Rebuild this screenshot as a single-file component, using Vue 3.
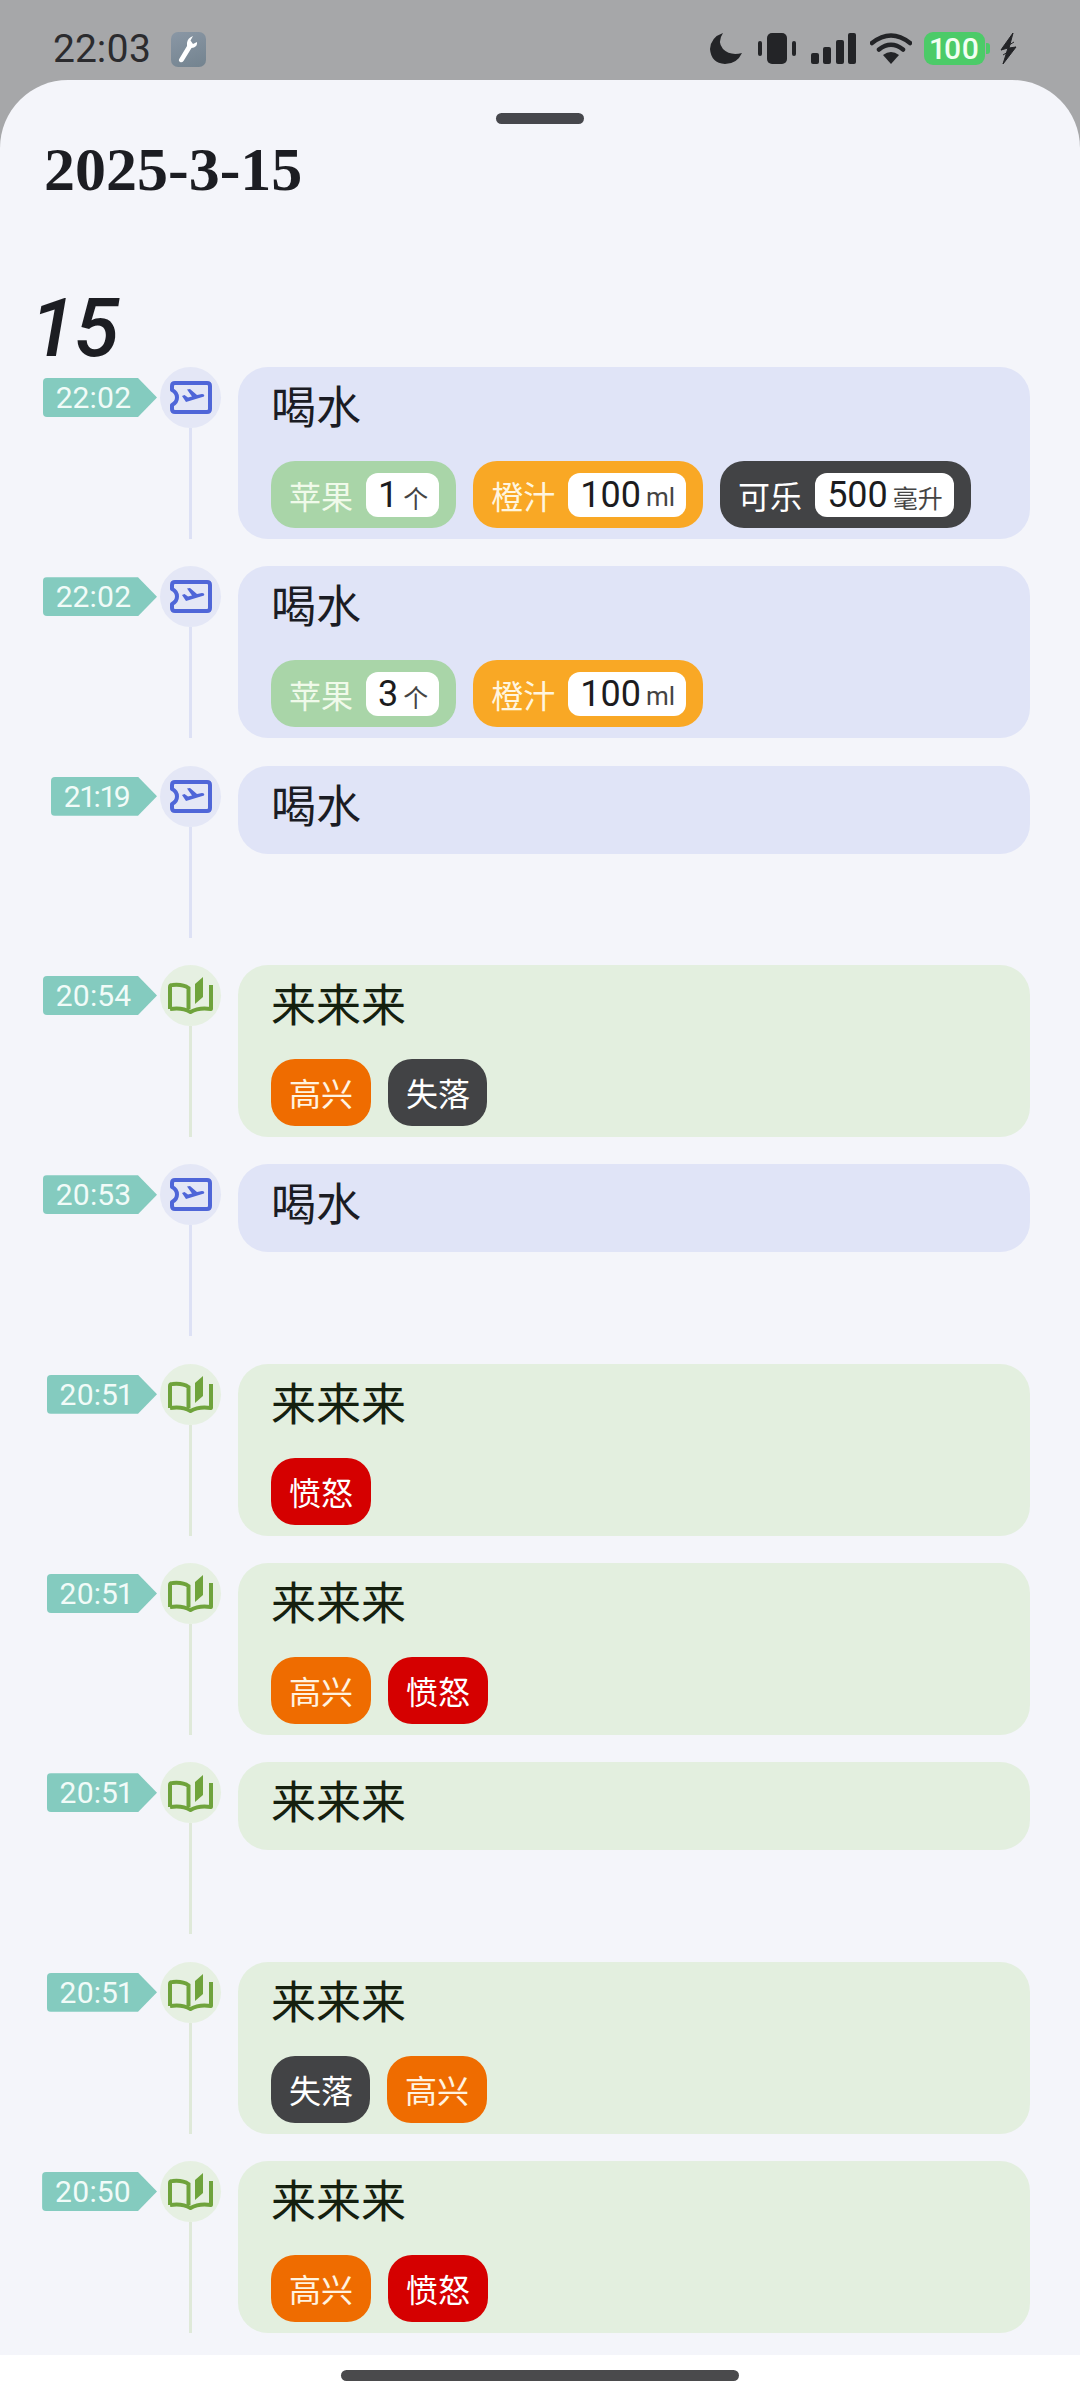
<script setup>
const blue = '喝水'
const green = '来来来'

const rows = [
  { time: '22:02', kind: 'drink', title: blue, tags: [
    { name: '苹果', color: 'green', value: '1', unit: '个' },
    { name: '橙汁', color: 'amber', value: '100', unit: 'ml' },
    { name: '可乐', color: 'dark', value: '500', unit: '毫升' },
  ] },
  { time: '22:02', kind: 'drink', title: blue, tags: [
    { name: '苹果', color: 'green', value: '3', unit: '个' },
    { name: '橙汁', color: 'amber', value: '100', unit: 'ml' },
  ] },
  { time: '21:19', kind: 'drink', title: blue, tags: [] },
  { time: '20:54', kind: 'read', title: green, tags: [
    { name: '高兴', color: 'orange' },
    { name: '失落', color: 'dark' },
  ] },
  { time: '20:53', kind: 'drink', title: blue, tags: [] },
  { time: '20:51', kind: 'read', title: green, tags: [{ name: '愤怒', color: 'red' }] },
  { time: '20:51', kind: 'read', title: green, tags: [
    { name: '高兴', color: 'orange' },
    { name: '愤怒', color: 'red' },
  ] },
  { time: '20:51', kind: 'read', title: green, tags: [] },
  { time: '20:51', kind: 'read', title: green, tags: [
    { name: '失落', color: 'dark' },
    { name: '高兴', color: 'orange' },
  ] },
  { time: '20:50', kind: 'read', title: green, tags: [
    { name: '高兴', color: 'orange' },
    { name: '愤怒', color: 'red' },
  ] },
]
</script>

<template>
  <div class="screen">
    <header class="status">
      <div class="status-left">
        <span class="clock">22:03</span>
        <span class="tool">
          <svg width="22" height="30" viewBox="0 0 22 30">
            <path d="M16 1 L13.5 5.5 L16 9 L20 7 Q20.5 11 17 12.5 L14.5 13 L6.5 26 Q5 28 3 27 Q1 25.5 2.5 23.5 L10 11 L10 8 Q10.5 3 16 1 Z" fill="#fff" />
          </svg>
        </span>
      </div>
      <div class="status-right">
        <svg class="ic-moon" width="32" height="31" viewBox="0 0 32 31">
          <path d="M13 0 Q7 9 13 16 Q20 23 32 20 Q27 31 15 31 Q1 30 0 16 Q1 4 13 0 Z" fill="#232427" />
        </svg>
        <svg class="ic-vib" width="38" height="31" viewBox="0 0 38 31">
          <rect x="9" y="0" width="20" height="31" rx="5" fill="#232427" />
          <rect x="0" y="8" width="4" height="15" rx="2" fill="#232427" />
          <rect x="34" y="8" width="4" height="15" rx="2" fill="#232427" />
        </svg>
        <svg class="ic-signal" width="45" height="31" viewBox="0 0 45 31">
          <rect x="0" y="20" width="8" height="11" rx="2" fill="#232427" />
          <rect x="12" y="14" width="8" height="17" rx="2" fill="#232427" />
          <rect x="25" y="7" width="8" height="24" rx="2" fill="#232427" />
          <rect x="37" y="0" width="8" height="31" rx="2" fill="#232427" />
        </svg>
        <svg class="ic-wifi" width="42" height="31" viewBox="0 0 42 31">
          <path d="M2 10 Q21 -5 40 10 M9 16.5 Q21 7 33 16.5" fill="none" stroke="#232427" stroke-width="4.5" stroke-linecap="round" />
          <path d="M21 31 L13 22 Q21 16 29 22 Z" fill="#232427" />
        </svg>
        <span class="battery">100<i class="nub"></i></span>
        <svg class="ic-bolt" width="17" height="31" viewBox="0 0 17 31">
          <path d="M13 0 L3 14 L1 17 L8 15 L3 31 L16 14 L9 15 Z M14 9 L1 17 M16 14 L3 22" fill="#232427" stroke="#232427" stroke-width="1" />
        </svg>
      </div>
    </header>

    <main class="sheet">
      <div class="handle"></div>
      <h1 class="date">2025-3-15</h1>
      <div class="day">15</div>
      <ul class="timeline">
        <li v-for="(row, i) in rows" :key="i" class="row" :class="row.kind">
          <div class="time-col">
            <span class="time">{{ row.time }}</span>
          </div>
          <div class="node">
            <div class="dot">
              <svg v-if="row.kind === 'drink'" width="42" height="33" viewBox="0 0 42 33">
                <path d="M5 2 H37 Q40 2 40 5 V28 Q40 31 37 31 H5 Q2 31 2 28 V24 Q7 21.5 7 16.5 Q7 11.5 2 9 V5 Q2 2 5 2 Z" fill="none" stroke="#4f66d8" stroke-width="4" stroke-linejoin="round" />
                <path d="M12 15 L14.5 14 L18 16.5 L22 15.5 L17 8.5 L20 8 L27 14 L32 13 Q35 13 34 15.5 L16 21 Z" fill="#4f66d8" />
              </svg>
              <svg v-else width="45" height="38" viewBox="0 0 45 38">
                <path d="M2 33 V11 Q2 9 4.5 9 Q15 8 20.5 12 V33" fill="none" stroke="#6fa33c" stroke-width="4" />
                <path d="M2 33 Q14 31 22.5 36 Q31 31 43 33 V9" fill="none" stroke="#6fa33c" stroke-width="4" stroke-linejoin="round" />
                <path d="M27 8 L35 1 V21 L27 28 Z" fill="#6fa33c" />
              </svg>
            </div>
            <div class="line"></div>
          </div>
          <div class="card">
            <div class="title">{{ row.title }}</div>
            <div v-if="row.tags.length" class="tags">
              <div v-for="tag in row.tags" :key="tag.name" class="tag" :class="tag.color">
                <span>{{ tag.name }}</span>
                <span v-if="tag.value" class="amount">
                  <b>{{ tag.value }}</b><small>{{ tag.unit }}</small>
                </span>
              </div>
            </div>
          </div>
        </li>
      </ul>
    </main>

    <footer class="nav">
      <div class="home"></div>
    </footer>
  </div>
</template>

<style>
html, body {
  margin: 0;
  background: #fff;
}
</style>

<style scoped>
.screen {
  width: 1080px;
  height: 2400px;
  display: flex;
  flex-direction: column;
  background: #a6a7a9;
  font-family: Roboto, "Noto Sans CJK SC", sans-serif;
  font-variant-numeric: proportional-nums;
  overflow: hidden;
}

/* status bar */
.status {
  height: 80px;
  flex: none;
  display: flex;
  justify-content: space-between;
  align-items: flex-start;
  box-sizing: border-box;
  padding: 32px 63px 0 53px;
}
.status-left {
  display: flex;
  align-items: center;
  gap: 20px;
}
.clock {
  font-size: 39px;
  line-height: 35px;
  color: #2b2b2e;
}
.tool {
  width: 35px;
  height: 35px;
  border-radius: 7px;
  background: linear-gradient(160deg, #8a97a5, #73838f);
  display: flex;
  align-items: center;
  justify-content: center;
}
.status-right {
  display: flex;
  align-items: center;
  height: 33px;
}
.ic-vib { margin-left: 16px; }
.ic-signal { margin-left: 15px; }
.ic-wifi { margin-left: 14px; }
.battery {
  position: relative;
  margin-left: 12px;
  width: 61px;
  height: 33px;
  border-radius: 9px;
  background: #4ccb68;
  color: #f2fff2;
  font-size: 30px;
  font-weight: 500;
  line-height: 33px;
  text-align: center;
}
.nub {
  position: absolute;
  right: -5px;
  top: 11px;
  width: 4px;
  height: 11px;
  border-radius: 0 3px 3px 0;
  background: #4ccb68;
}
.ic-bolt { margin-left: 15px; }

/* sheet */
.sheet {
  height: 2275px;
  flex: none;
  box-sizing: border-box;
  border-radius: 68px 68px 0 0;
  background: #f4f5fa;
  overflow: hidden;
}
.handle {
  width: 88px;
  height: 11px;
  border-radius: 6px;
  margin: 33px auto 0;
  background: #46474c;
}
.date {
  margin: 15px 0 0 44px;
  font-family: "Liberation Serif", serif;
  font-weight: 700;
  font-size: 62px;
  line-height: 60px;
  color: #1c1d22;
}
.day {
  margin: 91px 0 0 33px;
  height: 77px;
  font-size: 82px;
  line-height: 77px;
  letter-spacing: 4px;
  font-style: italic;
  font-weight: 500;
  color: #1c1d22;
}
.timeline {
  list-style: none;
  margin: 0;
  padding: 0;
  display: flex;
  flex-direction: column;
  gap: 27.33px;
}
.row {
  display: flex;
  height: 172px;
}
.time-col {
  width: 157px;
  flex: none;
  display: flex;
  justify-content: flex-end;
  align-items: flex-start;
  padding-top: 11px;
}
.time {
  height: 39px;
  line-height: 39px;
  box-sizing: border-box;
  padding: 0 26px 0 13px;
  font-size: 30px;
  color: #f1fbf8;
  background: #84cbbf;
  border-radius: 4px 0 0 4px;
  clip-path: polygon(0 0, calc(100% - 19px) 0, 100% 50%, calc(100% - 19px) 100%, 0 100%);
}
.node {
  width: 61px;
  margin-left: 3px;
  flex: none;
  display: flex;
  flex-direction: column;
  align-items: center;
}
.dot {
  width: 61px;
  height: 61px;
  flex: none;
  border-radius: 50%;
  display: flex;
  align-items: center;
  justify-content: center;
}
.line {
  width: 3px;
  flex: 1;
}
.drink .dot { background: #e4e7f6; }
.drink .line { background: #dde1f5; }
.read .dot { background: #e6f0e2; }
.read .line { background: #dfe9d9; }

.card {
  width: 792px;
  margin-left: 17px;
  flex: none;
  align-self: flex-start;
  box-sizing: border-box;
  padding: 0 33px 11px;
  border-radius: 30px;
}
.drink .card { background: #e0e4f7; }
.read .card { background: #e3efdf; }
.title {
  height: 77px;
  line-height: 84px;
  font-size: 45px;
  color: #1b1c24;
}
.read .title { color: #15200f; }
.tags {
  display: flex;
  gap: 17px;
  margin-top: 17px;
}
.tag {
  height: 67px;
  box-sizing: border-box;
  padding: 0 18px;
  border-radius: 24px;
  display: flex;
  align-items: center;
  gap: 13px;
  font-size: 32px;
  color: #fff;
}
.tag.green { background: #a9d5a8; color: #f0faea; padding-right: 17px; }
.tag.amber { background: #f9a825; color: #fff5df; padding-right: 17px; }
.tag.dark { background: #424345; padding-right: 17px; }
.tag.orange { background: #ef6c00; color: #fff3e0; }
.tag.red { background: #d50000; }
.amount {
  height: 44px;
  box-sizing: border-box;
  padding: 0 11px 0 12px;
  border-radius: 12px;
  background: #fff;
  display: flex;
  align-items: center;
  gap: 5px;
  color: #1c1c1e;
}
.amount b {
  font-weight: 400;
  font-size: 36px;
  font-variant-numeric: tabular-nums;
}
.amount small {
  font-size: 25px;
  color: #444;
  padding-top: 4px;
}
.tag.amber small {
  font-size: 26px;
}

/* nav bar */
.nav {
  flex: 1;
  background: #fff;
  display: flex;
  justify-content: center;
  padding-top: 15px;
}
.home {
  width: 398px;
  height: 11px;
  border-radius: 6px;
  background: #4a4a4c;
}
</style>
